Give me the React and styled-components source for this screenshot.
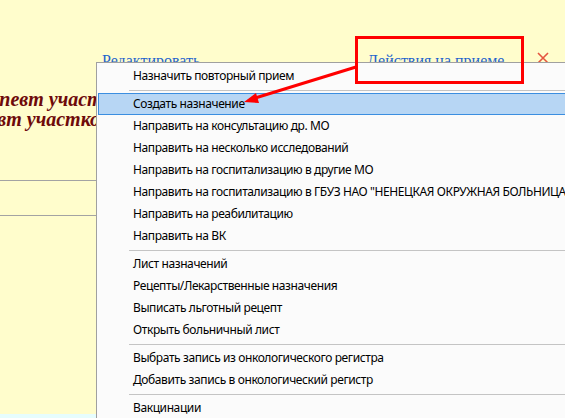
import React from 'react';
import styled, { createGlobalStyle } from 'styled-components';

const GlobalStyle = createGlobalStyle`
    html, body {
        margin: 0;
        padding: 0;
        overflow: hidden;
    }
    body {
        font-family: "Liberation Serif", serif;
    }
`;

const Screen = styled.div`
    position: relative;
    width: 565px;
    height: 418px;
    overflow: hidden;
    background-color: #fffdcc;
`;

const Header = styled.div`
    display: flex;
    align-items: flex-start;
    padding: 52px 0 0 102px;
    height: 18px;
`;

const Link = styled.span`
    display: block;
    width: ${props => props.width}px;
    font-family: "Liberation Serif", serif;
    font-size: 16px;
    line-height: 18px;
    color: #1f64cc;
    white-space: nowrap;
`;

const CloseMark = styled.svg`
    margin-top: 0;
    width: 12px;
    height: 12px;
`;

const DoctorBlock = styled.div`
    padding-top: 19px;
    height: 91px;
    border-bottom: 1px solid #a3a3a3;
    overflow: hidden;
`;

const DoctorLine = styled.div`
    margin-left: ${props => props.shift}px;
    font-family: "Liberation Serif", serif;
    font-size: 20px;
    line-height: 20px;
    font-weight: bold;
    font-style: italic;
    color: #6e0a0a;
    white-space: nowrap;
`;

const InfoRow = styled.div`
    height: 34px;
    border-bottom: 1px solid #a3a3a3;
`;

const Filler = styled.div`
    height: 198px;
`;

const BottomRow = styled.div`
    height: 10px;
    background-color: #e6fdfd;
`;

const Menu = styled.div`
    position: absolute;
    left: 96px;
    top: 62px;
    width: 480px;
    padding: 2px 0;
    background-color: #fbfbfb;
    border: 1px solid #a0a0a0;
    border-right: none;
    font-family: "Noto Sans", "Open Sans", sans-serif;
    font-size: 12px;
    letter-spacing: -0.4px;
    color: #000;
`;

const MenuItem = styled.div`
    height: 22px;
    margin-left: 1px;
    padding-left: 34px;
    white-space: nowrap;
    box-sizing: border-box;
    background-color: ${props => props.active ? '#b7d6f4' : 'transparent'};
    border: 1px solid ${props => props.active ? '#3b8ee0' : 'transparent'};
    border-right: none;
    line-height: 20px;
`;

const Separator = styled.div`
    height: 6px;
    display: flex;
    align-items: center;
    padding-left: 32px;

    &::after {
        content: '';
        flex: 1;
        height: 1px;
        background-color: #c4c4c4;
    }
`;

const Callout = styled.div`
    position: absolute;
    left: 355px;
    top: 36px;
    width: 163px;
    height: 42px;
    border: 3px solid #ff0000;
`;

const Arrow = styled.svg`
    position: absolute;
    left: 0;
    top: 0;
    width: 565px;
    height: 418px;
    pointer-events: none;
`;

const menuGroups = [
    ['Назначить повторный прием'],
    [
        'Создать назначение',
        'Направить на консультацию др. МО',
        'Направить на несколько исследований',
        'Направить на госпитализацию в другие МО',
        'Направить на госпитализацию в ГБУЗ НАО "НЕНЕЦКАЯ ОКРУЖНАЯ БОЛЬНИЦА"',
        'Направить на реабилитацию',
        'Направить на ВК',
    ],
    [
        'Лист назначений',
        'Рецепты/Лекарственные назначения',
        'Выписать льготный рецепт',
        'Открыть больничный лист',
    ],
    [
        'Выбрать запись из онкологического регистра',
        'Добавить запись в онкологический регистр',
    ],
    ['Вакцинации'],
];

export default function App() {
    return (
        <>
            <GlobalStyle />
            <Screen>
                <Header>
                    <Link width={265}>Редактировать</Link>
                    <Link width={170}>Действия на приеме</Link>
                    <CloseMark viewBox="0 0 12 12">
                        <path d="M1 1 L11 11 M11 1 L1 11" stroke="#e4553f" strokeWidth="1.6" fill="none" />
                    </CloseMark>
                </Header>
                <DoctorBlock>
                    <DoctorLine shift={-41}>Терапевт участковый</DoctorLine>
                    <DoctorLine shift={-63}>Терапевт участковый</DoctorLine>
                </DoctorBlock>
                <InfoRow />
                <Filler />
                <BottomRow />

                <Menu>
                    {menuGroups.map((group, gi) => (
                        <React.Fragment key={gi}>
                            {gi > 0 && <Separator />}
                            {group.map(item => (
                                <MenuItem key={item} active={item === 'Создать назначение'}>{item}</MenuItem>
                            ))}
                        </React.Fragment>
                    ))}
                </Menu>

                <Callout />
                <Arrow viewBox="0 0 565 418">
                    <line x1="356" y1="67" x2="252" y2="99" stroke="#ff0000" strokeWidth="3" />
                    <polygon points="244,102 256,93 259,103" fill="#ff0000" />
                </Arrow>
            </Screen>
        </>
    );
}
